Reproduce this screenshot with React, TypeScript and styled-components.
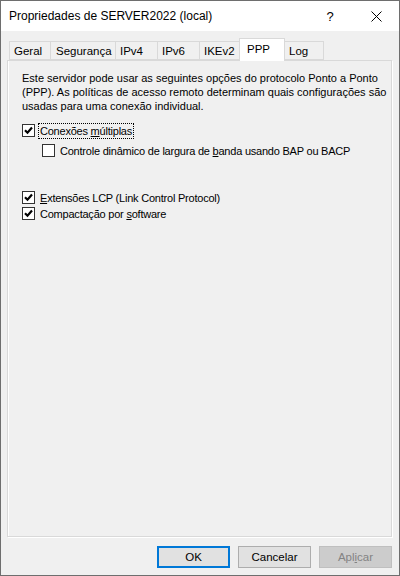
import React from "react";
import styled, { createGlobalStyle } from "styled-components";

const Global = createGlobalStyle`
  html, body { margin: 0; padding: 0; background: #ffffff; }
  body { font-family: "Liberation Sans", Arial, sans-serif; font-size: 11px; color: #000; }
  * { box-sizing: border-box; }
`;

const Window = styled.div`
  width: 400px;
  height: 576px;
  border: 1px solid #6e6e6e;
  display: flex;
  flex-direction: column;
  background: #f0f0f0;
`;

const TitleBar = styled.div`
  height: 30px;
  background: #ffffff;
  display: flex;
  align-items: center;
  padding-left: 8px;
  flex-shrink: 0;
`;

const Title = styled.div`
  font-size: 12px;
  flex: 1;
  white-space: nowrap;
`;

const CaptionButton = styled.div`
  width: 46px;
  height: 30px;
  display: flex;
  align-items: center;
  justify-content: center;
  font-size: 13px;
`;

const Body = styled.div`
  flex: 1;
  display: flex;
  flex-direction: column;
  padding: 7px 7px 7px 6px;
`;

const TabStrip = styled.div`
  height: 22px;
  display: flex;
  align-items: flex-end;
  padding-left: 2px;
  flex-shrink: 0;
`;

const Tab = styled.div<{ $w: number; $active?: boolean; $first?: boolean; $pad: number }>`
  position: relative;
  width: ${(p) => p.$w}px;
  height: ${(p) => (p.$active ? 23 : 19)}px;
  margin-left: ${(p) => (p.$first ? 0 : p.$active ? -3 : -1)}px;
  margin-right: ${(p) => (p.$active ? -2 : 0)}px;
  margin-bottom: ${(p) => (p.$active ? -1 : 0)}px;
  z-index: ${(p) => (p.$active ? 2 : 1)};
  border: 1px solid #d9d9d9;
  border-bottom: ${(p) => (p.$active ? "none" : "1px solid #d9d9d9")};
  background: ${(p) => (p.$active ? "#ffffff" : "#f0f0f0")};
  padding: ${(p) => (p.$active ? `2px 0 0 ${p.$pad}px` : `1px 0 0 ${p.$pad}px`)};
  display: flex;
  align-items: ${(p) => (p.$active ? "flex-start" : "center")};
  font-size: 11.5px;
  white-space: nowrap;
  line-height: 16px;
`;

const Panel = styled.div`
  flex: 1;
  border: 1px solid #d9d9d9;
  box-shadow: 1px 1px 0 #ffffff, inset 1px 0 0 #ffffff;
  background: #f0f0f0;
  padding: 10px 14px;
  display: flex;
  flex-direction: column;
`;

const Intro = styled.p`
  margin: 0;
  line-height: 14px;
  white-space: nowrap;
`;

const Row = styled.div<{ $top: number; $indent: number }>`
  display: flex;
  align-items: center;
  height: 15px;
  margin-top: ${(p) => p.$top}px;
  margin-left: ${(p) => p.$indent}px;
  gap: 4px;
`;

const Box = styled.span`
  width: 13px;
  height: 13px;
  border: 1px solid #333333;
  background: #ffffff;
  display: flex;
  align-items: center;
  justify-content: center;
  flex-shrink: 0;
`;

const Label = styled.span<{ $focus?: boolean }>`
  padding: 0 1px;
  line-height: 14px;
  letter-spacing: -0.22px;
  white-space: nowrap;
  outline: ${(p) => (p.$focus ? "1px dotted #000" : "none")};
  outline-offset: 0;
`;

const Mn = styled.span`
  text-decoration: underline;
  text-underline-offset: 1px;
`;

const Buttons = styled.div`
  display: flex;
  justify-content: flex-end;
  gap: 8px;
  margin-top: 9px;
  flex-shrink: 0;
`;

const Button = styled.div<{ $default?: boolean; $disabled?: boolean }>`
  width: 73px;
  height: 22px;
  display: flex;
  align-items: center;
  justify-content: center;
  font-size: 11.5px;
  background: ${(p) => (p.$disabled ? "#cccccc" : "#e1e1e1")};
  color: ${(p) => (p.$disabled ? "#838383" : "#000")};
  border: ${(p) =>
    p.$default ? "2px solid #0078d7" : p.$disabled ? "1px solid #bfbfbf" : "1px solid #adadad"};
`;

const Check = () => (
  <svg width="9" height="9" viewBox="0 0 9 9">
    <path d="M1 4.2 L3.5 6.7 L8 1.5" fill="none" stroke="#000" strokeWidth="2.2" />
  </svg>
);

const CheckBox = ({ checked }: { checked: boolean }) => <Box>{checked ? <Check /> : null}</Box>;

const tabs: { label: string; w: number; pad: number; active?: boolean }[] = [
  { label: "Geral", w: 42, pad: 4 },
  { label: "Segurança", w: 66, pad: 5 },
  { label: "IPv4", w: 43, pad: 4 },
  { label: "IPv6", w: 43, pad: 4 },
  { label: "IKEv2", w: 43, pad: 4 },
  { label: "PPP", w: 46, pad: 7, active: true },
  { label: "Log", w: 42, pad: 6 },
];

export default function App() {
  return (
    <>
      <Global />
      <Window>
        <TitleBar>
          <Title>Propriedades de SERVER2022 (local)</Title>
          <CaptionButton>?</CaptionButton>
          <CaptionButton>
            <svg width="11" height="11" viewBox="0 0 11 11">
              <path d="M0.5 0.5 L10.5 10.5 M10.5 0.5 L0.5 10.5" stroke="#000" strokeWidth="1" />
            </svg>
          </CaptionButton>
        </TitleBar>
        <Body>
          <TabStrip>
            {tabs.map((t, i) => (
              <Tab key={t.label} $w={t.w} $pad={t.pad} $active={t.active} $first={i === 0}>
                {t.label}
              </Tab>
            ))}
          </TabStrip>
          <Panel>
            <Intro>
              Este servidor pode usar as seguintes opções do protocolo Ponto a Ponto
              <br />
              (PPP). As políticas de acesso remoto determinam quais configurações são
              <br />
              usadas para uma conexão individual.
            </Intro>
            <Row $top={10} $indent={0}>
              <CheckBox checked />
              <Label $focus>
                Conexões <Mn>m</Mn>últiplas
              </Label>
            </Row>
            <Row $top={5} $indent={20}>
              <CheckBox checked={false} />
              <Label>
                Controle dinâmico de largura de <Mn>b</Mn>anda usando BAP ou BACP
              </Label>
            </Row>
            <Row $top={32} $indent={0}>
              <CheckBox checked />
              <Label>
                <Mn>E</Mn>xtensões LCP (Link Control Protocol)
              </Label>
            </Row>
            <Row $top={1} $indent={0}>
              <CheckBox checked />
              <Label>
                Compactação por <Mn>s</Mn>oftware
              </Label>
            </Row>
          </Panel>
          <Buttons>
            <Button $default>OK</Button>
            <Button>Cancelar</Button>
            <Button $disabled>
              Apl<Mn>i</Mn>car
            </Button>
          </Buttons>
        </Body>
      </Window>
    </>
  );
}
